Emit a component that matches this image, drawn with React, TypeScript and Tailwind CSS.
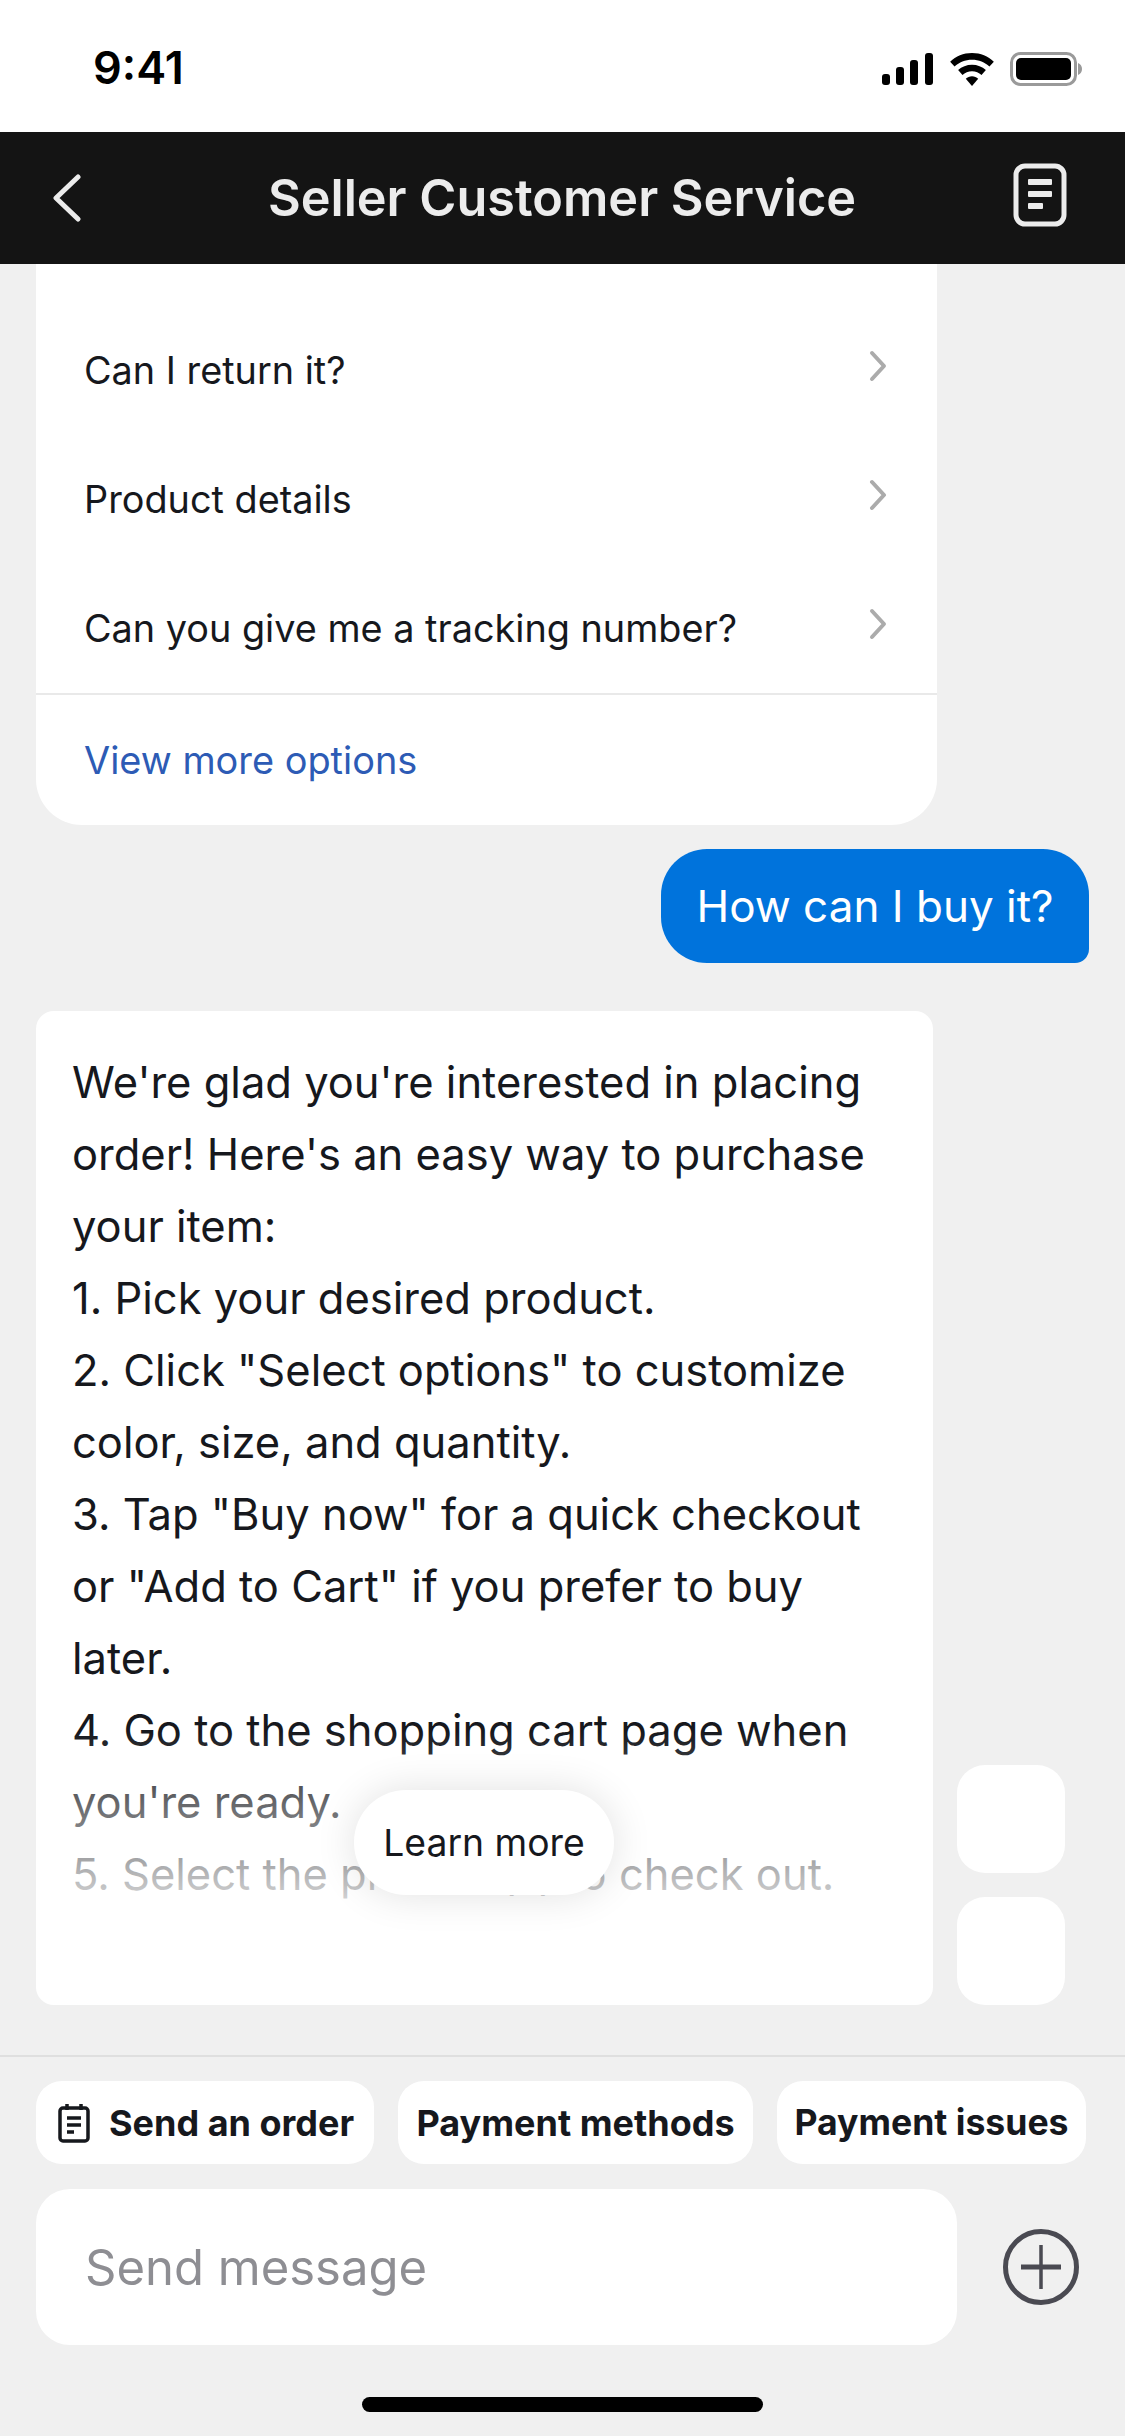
import React from 'react';

const FONT = "font-['Inter','Liberation_Sans',sans-serif]";

const OPTIONS = ['Can I return it?', 'Product details', 'Can you give me a tracking number?'];

const LINES = [
  "We're glad you're interested in placing",
  "order! Here's an easy way to purchase",
  'your item:',
  '1. Pick your desired product.',
  '2. Click "Select options" to customize',
  'color, size, and quantity.',
  '3. Tap "Buy now" for a quick checkout',
  'or "Add to Cart" if you prefer to buy',
  'later.',
  '4. Go to the shopping cart page when',
  "you're ready.",
  '5. Select the product(s) to check out.',
];

const StatusIcons = () => (
  <div className="flex items-center gap-[15px]">
    <svg width="52" height="32" viewBox="0 0 52 32" fill="#000">
      <rect x="0" y="21" width="8" height="11" rx="3" />
      <rect x="14" y="14" width="8" height="18" rx="3" />
      <rect x="28" y="7" width="8" height="25" rx="3" />
      <rect x="43" y="0" width="8" height="32" rx="3" />
    </svg>
    <svg width="46" height="33" viewBox="0 0 46 34" fill="#000">
      <path d="M23 0C14 0 6.500 3.300 0.500 9L5 14C9.800 9.600 16 7 23 7s13.200 2.600 18 7l4.500-5C39.500 3.300 32 0 23 0z" />
      <path d="M23 12c-5.500 0-10.500 2-14.300 5.600l4.500 5c2.600-2.400 6-3.800 9.800-3.800s7.200 1.400 9.800 3.800l4.500-5C33.500 14 28.500 12 23 12z" />
      <path d="M23 24c-2.500 0-4.700 0.900-6.400 2.500L23 34l6.400-7.500C27.700 24.900 25.500 24 23 24z" />
    </svg>
    <svg width="72" height="34" viewBox="0 0 72 34">
      <rect x="1.500" y="1.500" width="64" height="31" rx="9" fill="none" stroke="#9a9a9a" strokeWidth="3" />
      <rect x="6" y="6" width="55" height="22" rx="5" fill="#000" />
      <path d="M68 11c2.500 1 4 3 4 6s-1.500 5-4 6z" fill="#9a9a9a" />
    </svg>
  </div>
);

const RowChevron = () => (
  <svg width="18" height="32" viewBox="0 0 18 32" fill="none" stroke="#ababab" strokeWidth="4" strokeLinecap="round" strokeLinejoin="round" className="-mt-[8px] mr-[2px]">
    <path d="M3 3l12 13L3 29" />
  </svg>
);

const App: React.FC = () => (
  <div className={`w-[1125px] h-[2436px] flex flex-col bg-[#f0f0f0] overflow-hidden ${FONT}`}>
    {/* Status bar */}
    <div className="h-[132px] shrink-0 bg-white flex items-center justify-between pl-[93px] pr-[43px] pt-[6px]">
      <span className="text-[45px] font-semibold text-black leading-none -mt-[4px]">9:41</span>
      <StatusIcons />
    </div>

    {/* Header */}
    <div className="h-[132px] shrink-0 bg-[#141414] grid grid-cols-[1fr_auto_1fr] items-center pl-[52px] pr-[58px]">
      <svg width="30" height="48" viewBox="0 0 30 48" fill="none" stroke="#ececec" strokeWidth="5" strokeLinecap="round" strokeLinejoin="round">
        <path d="M26 3L4 24l22 21" />
      </svg>
      <h1 className="text-[50.400px] font-semibold text-[#ececec] leading-none mt-[1px] ml-[5px]">Seller Customer Service</h1>
      <svg width="54" height="64" viewBox="0 0 54 64" fill="none" className="justify-self-end -mt-[6px]">
        <rect x="3" y="3" width="48" height="58" rx="9" stroke="#ececec" strokeWidth="5" />
        <rect x="15" y="16" width="24" height="6" rx="1" fill="#ececec" />
        <rect x="15" y="28" width="24" height="6" rx="1" fill="#ececec" />
        <rect x="15" y="40" width="15" height="6" rx="1" fill="#ececec" />
      </svg>
    </div>

    {/* Chat */}
    <main className="flex-1 min-h-0 flex flex-col border-b-[2px] border-[#dfdfdf]">
      <div className="ml-[36px] w-[901px] h-[561px] shrink-0 bg-white rounded-b-[46px] pt-[41px]">
        {OPTIONS.map((label) => (
          <div key={label} className="h-[129px] flex items-center justify-between pl-[48px] pr-[48px]">
            <span className="text-[37.800px] text-[#16181d] leading-none mt-[2px]">{label}</span>
            <RowChevron />
          </div>
        ))}
        <div className="h-[2px] bg-[#e9e9e9] mt-[1px]" />
        <div className="h-[130px] flex items-center pl-[48px]">
          <span className="text-[37.900px] text-[#2d5bb5] leading-none mt-[2px]">View more options</span>
        </div>
      </div>

      <div className="mt-[24px] mr-[36px] self-end h-[114px] w-[428px] shrink-0 bg-[#0073dc] rounded-[46px] rounded-br-[14px] flex items-center justify-center">
        <span className="text-[44px] text-white leading-none">How can I buy it?</span>
      </div>

      <div className="mt-[48px] ml-[36px] flex items-end gap-[24px]">
        <div className="relative w-[897px] h-[994px] bg-white rounded-[18px] pt-[35px] pl-[36px] overflow-hidden">
          {LINES.map((line) => (
            <div key={line} className="text-[43.500px] leading-[72px] text-[#16181d] whitespace-nowrap">{line}</div>
          ))}
          <div className="absolute left-0 right-0 top-[720px] h-[210px] bg-gradient-to-b from-white/0 to-white" />
          <div className="absolute left-[318px] top-[779px] w-[260px] h-[105px] bg-white rounded-[52px] shadow-[0_0_40px_rgba(0,0,0,0.12)] flex items-center justify-center">
            <span className="text-[37.300px] text-[#16181d] leading-none">Learn more</span>
          </div>
        </div>
        <div className="flex flex-col gap-[24px]">
          <div className="w-[108px] h-[108px] bg-white rounded-[28px]" />
          <div className="w-[108px] h-[108px] bg-white rounded-[28px]" />
        </div>
      </div>
    </main>

    {/* Composer */}
    <div className="h-[379px] shrink-0 pt-[24px] flex flex-col">
      <div className="flex gap-[24px] pl-[36px]">
        <div className="w-[338px] h-[83px] bg-white rounded-[26px] flex items-center pl-[22px] gap-[19px]">
          <svg width="32" height="40" viewBox="0 0 32 40" fill="none" stroke="#16181d" strokeWidth="3.500">
            <rect x="2" y="5" width="28" height="33" rx="3" />
            <path d="M9 1v6M23 1v6M9 15h14M9 22h14M9 29h7" />
          </svg>
          <span className="text-[36px] font-bold text-[#16181d] leading-none">Send an order</span>
        </div>
        <div className="w-[355px] h-[83px] bg-white rounded-[26px] flex items-center justify-center">
          <span className="text-[36px] font-bold text-[#16181d] leading-none">Payment methods</span>
        </div>
        <div className="w-[309px] h-[83px] bg-white rounded-[26px] flex items-center justify-center">
          <span className="text-[35.600px] font-bold text-[#16181d] leading-none">Payment issues</span>
        </div>
      </div>
      <div className="mt-[25px] flex items-center pl-[36px]">
        <div className="w-[921px] h-[156px] bg-white rounded-[34px] flex items-center pl-[49px]">
          <span className="text-[49px] text-[#8e8e93] leading-none">Send message</span>
        </div>
        <svg width="76" height="76" viewBox="0 0 76 76" fill="none" stroke="#4a4a52" className="ml-[46px]">
          <circle cx="38" cy="38" r="35.500" strokeWidth="5" />
          <path d="M38 16v44" strokeWidth="3.500" />
          <path d="M18 38h40" strokeWidth="5" />
        </svg>
      </div>
      <div className="mt-[52px] self-center w-[401px] h-[15px] bg-black rounded-full" />
    </div>
  </div>
);

export default App;
